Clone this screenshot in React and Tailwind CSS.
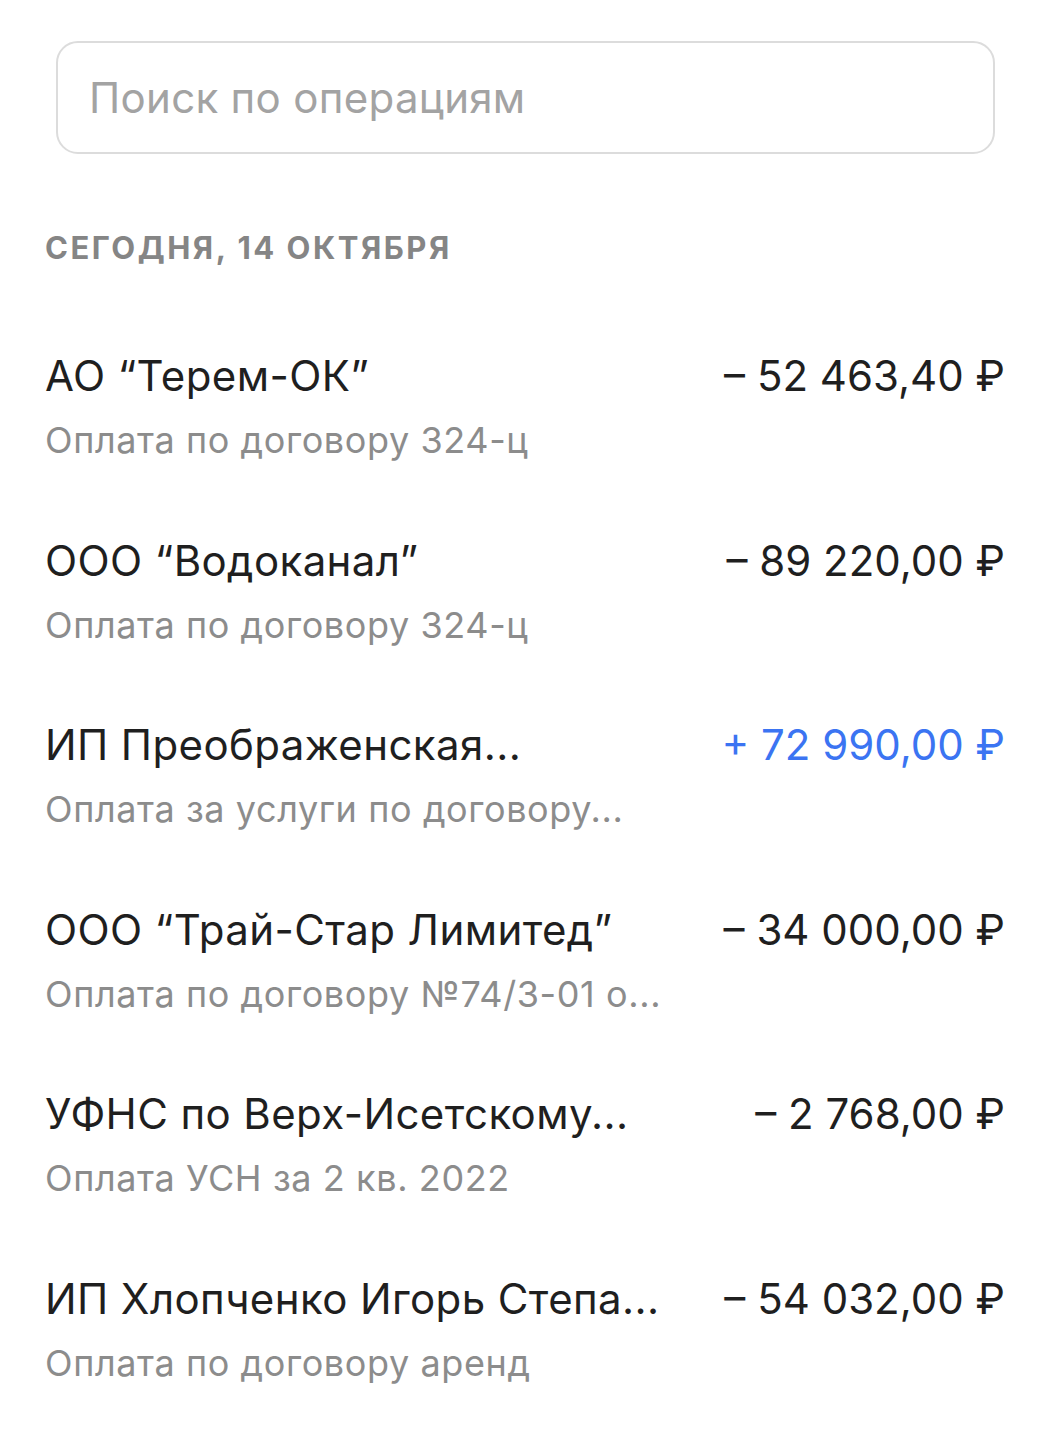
import React from 'react';

const operations = [
  { name: 'АО “Терем-ОК”', note: 'Оплата по договору 324-ц', amount: '– 52 463,40 ₽' },
  { name: 'ООО “Водоканал”', note: 'Оплата по договору 324-ц', amount: '– 89 220,00 ₽' },
  { name: 'ИП Преображенская...', note: 'Оплата за услуги по договору...', amount: '+ 72 990,00 ₽', income: true },
  { name: 'ООО “Трай-Стар Лимитед”', note: 'Оплата по договору №74/3-01 о...', amount: '– 34 000,00 ₽' },
  { name: 'УФНС по Верх-Исетскому...', note: 'Оплата УСН за 2 кв. 2022', amount: '– 2 768,00 ₽' },
  { name: 'ИП Хлопченко Игорь Степа...', note: 'Оплата по договору аренд', amount: '– 54 032,00 ₽' },
];

export default function App() {
  return (
    <div className="min-h-screen bg-white font-['Inter','Liberation_Sans',sans-serif] pl-[45px] pr-[47px]">
      <div className="pt-[41px] pl-[11px] pr-[10px]">
        <div className="h-[113px] rounded-[22px] border-2 border-[#dcdcdc] flex items-center px-[31px]">
          <span className="text-[42px] text-[#a3a3a3] tracking-[0.3px]">Поиск по операциям</span>
        </div>
      </div>

      <div className="mt-[78px] text-[31px] font-bold text-[#858585] tracking-[2.5px] leading-none">
        СЕГОДНЯ, 14 ОКТЯБРЯ
      </div>

      <div className="mt-[87px] flex flex-col gap-[68.5px]">
        {operations.map((op, i) => (
          <div key={i} className="flex justify-between items-start">
            <div className="flex flex-col gap-[12px]">
              <div className="text-[42px] leading-[52px] text-[#1f1f1f] tracking-[0.4px] whitespace-nowrap">{op.name}</div>
              <div className="text-[36px] leading-[52px] text-[#8c8c8c] tracking-[0.6px] whitespace-nowrap">{op.note}</div>
            </div>
            <div className={`text-[42px] leading-[52px] tracking-[0px] whitespace-nowrap ${op.income ? 'text-[#3b74f2]' : 'text-[#1f1f1f]'}`}>
              {op.amount}
            </div>
          </div>
        ))}
      </div>
    </div>
  );
}
